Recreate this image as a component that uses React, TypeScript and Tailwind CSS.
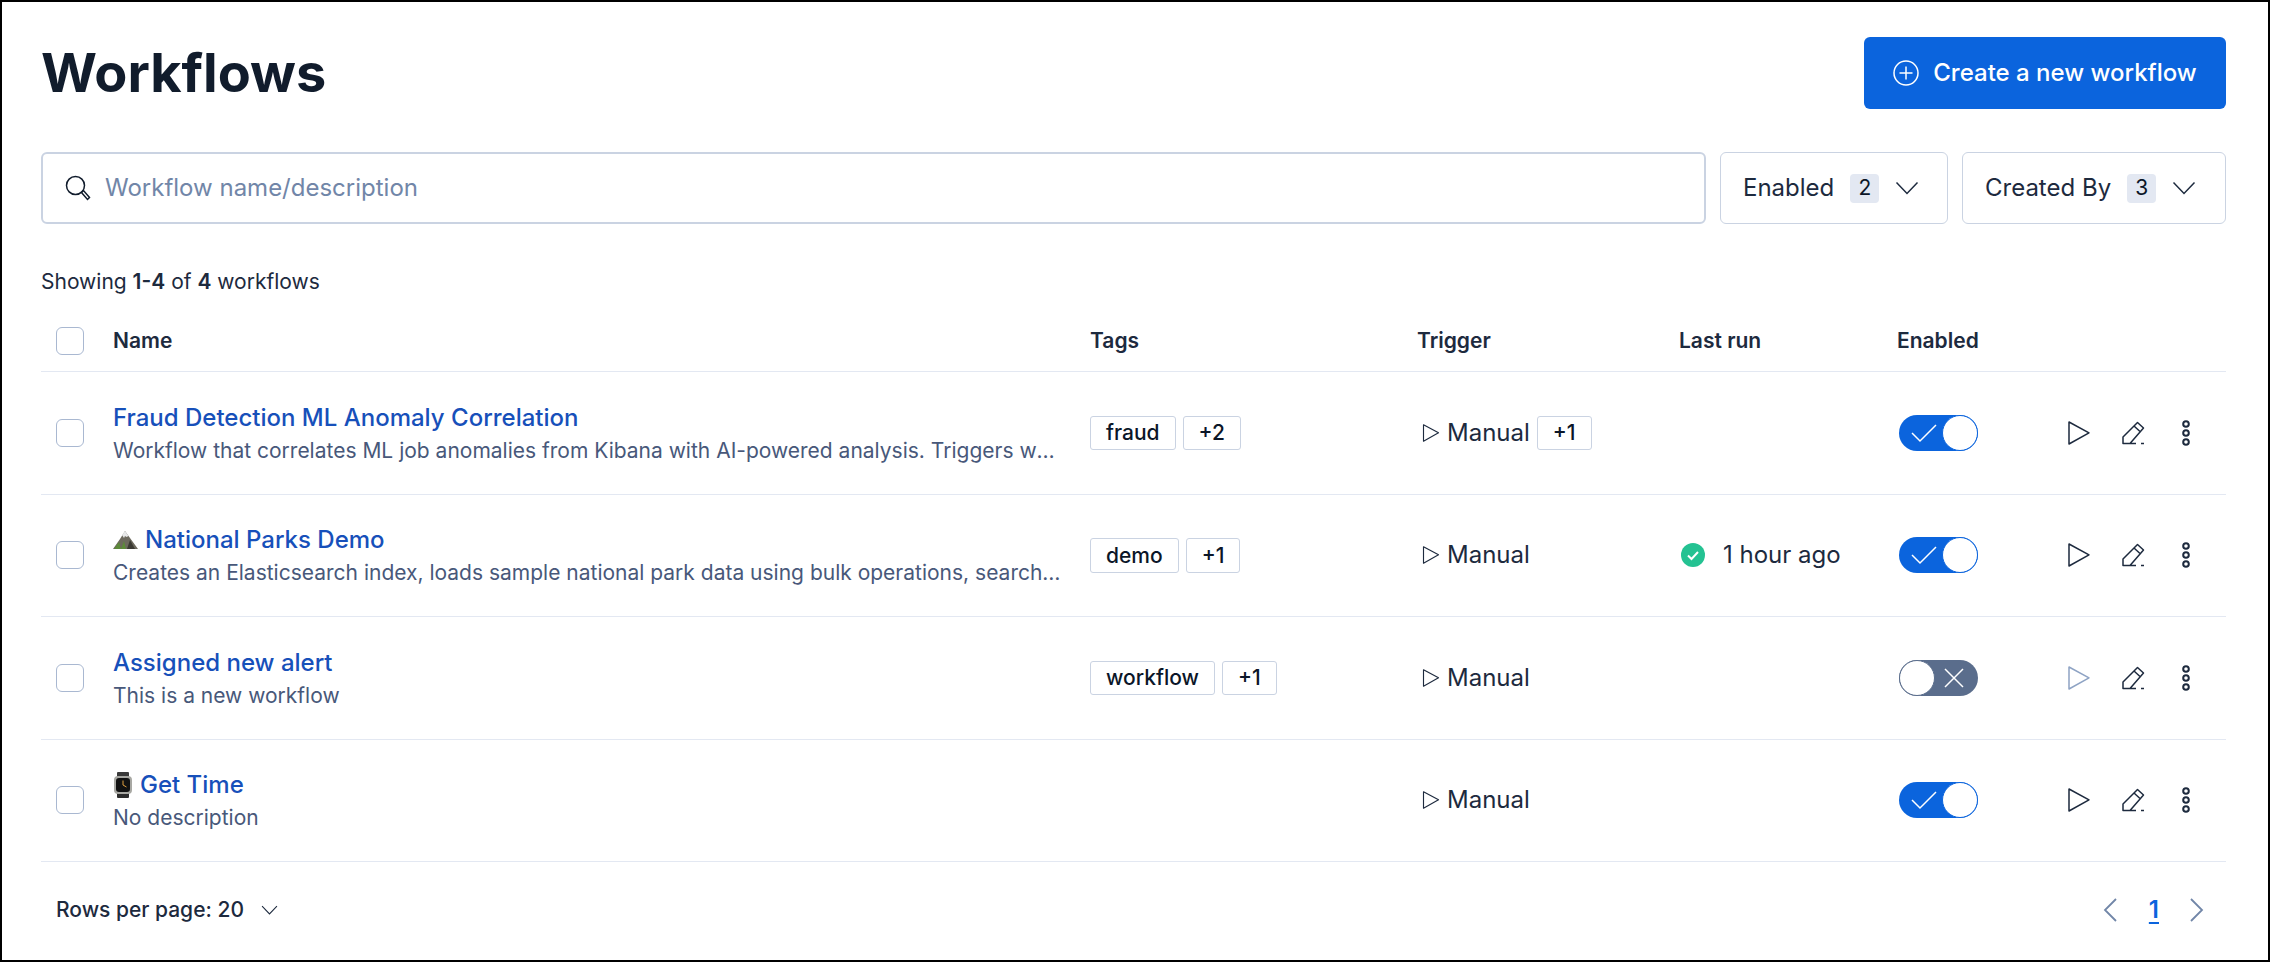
import React from "react";

const font = { fontFamily: "Inter, sans-serif" };

function Chevron({ className = "" }: { className?: string }) {
  return (
    <svg viewBox="0 0 24 14" className={className} fill="none" stroke="currentColor" strokeWidth="1.5">
      <path d="M1.5 1.5 12 12.5 22.5 1.5" />
    </svg>
  );
}

function PlayIcon({ size = 24, color = "#1d2a3e" }: { size?: number; color?: string }) {
  return (
    <svg width={size} height={size} viewBox="0 0 24 24" fill="none" stroke={color} strokeWidth="1.5" strokeLinejoin="round">
      <path d="M2 1v22l20-11.2z" />
    </svg>
  );
}

function EditIcon() {
  return (
    <svg width="24" height="24" viewBox="0 0 24 24" fill="none" stroke="#1d2a3e" strokeWidth="1.5" strokeLinejoin="round">
      <path d="M1 22.5v-6.5L15.5 1.5l6 5.5L8 22.5zM1 22.5h13M12 5l6 5.500M19 22.500h3" />
    </svg>
  );
}

function DotsIcon() {
  return (
    <svg width="10" height="26" viewBox="0 0 10 26" fill="none" stroke="#1d2a3e" strokeWidth="2">
      <circle cx="5" cy="4" r="2.800" />
      <circle cx="5" cy="13" r="2.800" />
      <circle cx="5" cy="22" r="2.800" />
    </svg>
  );
}

function Toggle({ on }: { on: boolean }) {
  return on ? (
    <div className="flex h-[36px] w-[79px] items-center justify-between rounded-full bg-[#0b64dd] pl-[12px]">
      <svg width="26" height="20" viewBox="0 0 26 20" fill="none" stroke="#ffffff" strokeWidth="1.500">
        <path d="M1 10l8 8L25 2" />
      </svg>
      <div className="h-[36px] w-[36px] rounded-full border border-[#0b64dd] bg-white" />
    </div>
  ) : (
    <div className="flex h-[36px] w-[79px] items-center justify-between rounded-full bg-[#5a6d8c] pr-[14px]">
      <div className="h-[36px] w-[36px] rounded-full border border-[#5a6d8c] bg-white" />
      <svg width="20" height="20" viewBox="0 0 20 20" fill="none" stroke="#ffffff" strokeWidth="1.500">
        <path d="M1 1l18 18M19 1L1 19" />
      </svg>
    </div>
  );
}

function Tag({ children, h = "h-[34px]" }: { children: React.ReactNode; h?: string }) {
  return (
    <span className={`flex ${h} items-center rounded-[3px] border border-[#cad3e2] bg-white px-[15px] text-[21px] font-medium text-[#0b1628]`}>
      {children}
    </span>
  );
}

function Mountain() {
  return (
    <svg width="25" height="20" viewBox="0 0 25 20">
      <path d="M0 19 7 9l5-8 5 7 8 11z" fill="#6d6a5e" />
      <path d="M9 5l3-4 3.500 5-2 1-1.500-1-1 2z" fill="#e8e9ea" />
      <path d="M1 19l5-7 2 7zM8 19l3-8 2 8z" fill="#5d8a3a" />
      <path d="M14 19l3-9 5 9z" fill="#3b3a33" />
    </svg>
  );
}

function Watch() {
  return (
    <svg width="20" height="26" viewBox="0 0 20 26">
      <rect x="4" y="0" width="12" height="6" rx="1" fill="#3a3a3a" />
      <rect x="4" y="20" width="12" height="6" rx="1" fill="#2c2c2c" />
      <rect x="1" y="4" width="18" height="18" rx="4" fill="#a8a8a3" />
      <rect x="3" y="6" width="14" height="14" rx="3" fill="#111111" />
      <path d="M10 13V8.500M10 13l3.500 2" stroke="#e0a040" strokeWidth="1" fill="none" />
    </svg>
  );
}

type Row = {
  emoji?: React.ReactNode;
  name: string;
  desc: string;
  tags?: [string, string];
  extra?: boolean;
  last?: boolean;
  on: boolean;
  tagH?: string;
  dim?: boolean;
};

const rows: Row[] = [
  {
    name: "Fraud Detection ML Anomaly Correlation",
    desc: "Workflow that correlates ML job anomalies from Kibana with AI-powered analysis. Triggers when anomalies are detected in the pipeline",
    tags: ["fraud", "+2"],
    extra: true,
    on: true,
  },
  {
    emoji: <Mountain />,
    name: "National Parks Demo",
    desc: "Creates an Elasticsearch index, loads sample national park data using bulk operations, searches for parks and more",
    tags: ["demo", "+1"],
    last: true,
    on: true,
    tagH: "h-[35px]",
  },
  {
    name: "Assigned new alert",
    desc: "This is a new workflow",
    tags: ["workflow", "+1"],
    on: false,
    dim: true,
  },
  {
    emoji: <Watch />,
    name: "Get Time",
    desc: "No description",
    on: true,
  },
];

function Checkbox() {
  return <div className="h-[28px] w-[28px] rounded-[6px] border border-[#a9b8d1] bg-white" />;
}

export default function App() {
  return (
    <div className="h-[962px] w-[2270px] overflow-hidden border-2 border-black bg-white" style={font}>
      <div className="flex flex-col pl-[39px] pr-[42px] pt-[35px]">
        <div className="flex h-[72px] items-center justify-between">
          <h1 className="text-[54px] leading-[72px] font-bold text-[#111c2c]">Workflows</h1>
          <button className="flex h-[72px] w-[362px] items-center justify-center gap-[14px] rounded-[6px] bg-[#0b64dd] text-[24px] font-medium text-white">
            <svg width="26" height="26" viewBox="0 0 26 26" fill="none" stroke="#ffffff" strokeWidth="1.500">
              <circle cx="13" cy="13" r="12" />
              <path d="M13 6.500v13M6.500 13h13" />
            </svg>
            Create a new workflow
          </button>
        </div>

        <div className="mt-[43px] flex h-[72px] gap-[14px]">
          <div className="flex flex-1 items-center gap-[14px] rounded-[6px] border-2 border-[#cad3e2] pl-[22px]">
            <svg width="26" height="26" viewBox="0 0 26 26" fill="none" stroke="#111c2c" strokeWidth="1.500">
              <circle cx="10.500" cy="10.500" r="9" />
              <path d="M16.500 17.500l2-2 6 7-2 2z" />
            </svg>
            <span className="text-[24px] text-[#7186a8]">Workflow name/description</span>
          </div>
          <div className="flex w-[228px] items-center rounded-[6px] border border-[#cad3e2] pl-[22px] text-[24px] text-[#1d2a3e]">
            Enabled
            <span className="ml-[16px] flex h-[29px] w-[29px] items-center justify-center rounded-[4px] bg-[#e3e8f2] text-[21px] text-[#0b1628]">2</span>
            <Chevron className="ml-[16px] h-[14px] w-[24px]" />
          </div>
          <div className="flex w-[264px] items-center rounded-[6px] border border-[#cad3e2] pl-[22px] text-[24px] text-[#1d2a3e]">
            Created By
            <span className="ml-[16px] flex h-[29px] w-[29px] items-center justify-center rounded-[4px] bg-[#e3e8f2] text-[21px] text-[#0b1628]">3</span>
            <Chevron className="ml-[16px] h-[14px] w-[24px]" />
          </div>
        </div>

        <div className="mt-[46px] text-[21px] leading-[24px] text-[#1d2a3e]">
          Showing <b className="font-semibold">1-4</b> of <b className="font-semibold">4</b> workflows
        </div>

        <div className="mt-[17px] flex h-[61px] items-center border-b border-[#e3e8f2] text-[21px] font-semibold text-[#1d2a3e]">
          <div className="w-[72px] pl-[15px]"><Checkbox /></div>
          <div className="w-[977px]">Name</div>
          <div className="w-[327px]">Tags</div>
          <div className="w-[262px]">Trigger</div>
          <div className="w-[218px]">Last run</div>
          <div>Enabled</div>
        </div>

        {rows.map((r) => (
          <div key={r.name} className="flex h-[122.500px] items-center border-b border-[#e3e8f2]">
            <div className="w-[72px] shrink-0 pl-[15px]"><Checkbox /></div>
            <div className="w-[977px] shrink-0 pr-[27px]">
              <div className="flex items-center gap-[7px] text-[24px] leading-[36px] font-medium text-[#1750ba]">
                {r.emoji}
                <span>{r.name}</span>
              </div>
              <div className="truncate text-[21px] leading-[30px] text-[#48587a]">{r.desc}</div>
            </div>
            <div className="flex w-[332px] shrink-0 gap-[7px]">
              {r.tags && (
                <>
                  <Tag h={r.tagH}>{r.tags[0]}</Tag>
                  <Tag h={r.tagH}>{r.tags[1]}</Tag>
                </>
              )}
            </div>
            <div className="flex w-[259px] shrink-0 items-center text-[24px] text-[#1d2a3e]">
              <PlayIcon size={18} />
              <span className="ml-[7px]">Manual</span>
              {r.extra && <span className="ml-[7px]"><Tag>+1</Tag></span>}
            </div>
            <div className="flex w-[218px] shrink-0 items-center text-[24px] text-[#1d2a3e]">
              {r.last && (
                <>
                  <svg width="24" height="24" viewBox="0 0 24 24">
                    <circle cx="12" cy="12" r="12" fill="#24c292" />
                    <path d="M7 12.500l3.500 3.500 6.500-7" fill="none" stroke="#ffffff" strokeWidth="2" />
                  </svg>
                  <span className="ml-[18px]">1 hour ago</span>
                </>
              )}
            </div>
            <div className="w-[168px] shrink-0"><Toggle on={r.on} /></div>
            <div className="flex items-center">
              <PlayIcon color={r.dim ? "#8ea3c4" : "#1d2a3e"} />
              <span className="ml-[31px] flex"><EditIcon /></span>
              <span className="ml-[35px] flex"><DotsIcon /></span>
            </div>
          </div>
        ))}

        <div className="flex h-[95px] items-center justify-between">
          <div className="flex items-center pl-[15px] text-[21px] font-medium text-[#1d2a3e]">
            Rows per page: 20
            <Chevron className="ml-[17px] h-[10px] w-[17px]" />
          </div>
          <div className="flex items-center pr-[22px]">
            <svg width="14" height="24" viewBox="0 0 14 24" fill="none" stroke="#7186a8" strokeWidth="1.800">
              <path d="M13 1 2 12l11 11" />
            </svg>
            <span className="ml-[32px] text-[24px] font-semibold text-[#0b64dd] underline underline-offset-4">1</span>
            <svg className="ml-[31px]" width="14" height="24" viewBox="0 0 14 24" fill="none" stroke="#7186a8" strokeWidth="1.800">
              <path d="M1 1l11 11L1 23" />
            </svg>
          </div>
        </div>
      </div>
    </div>
  );
}
